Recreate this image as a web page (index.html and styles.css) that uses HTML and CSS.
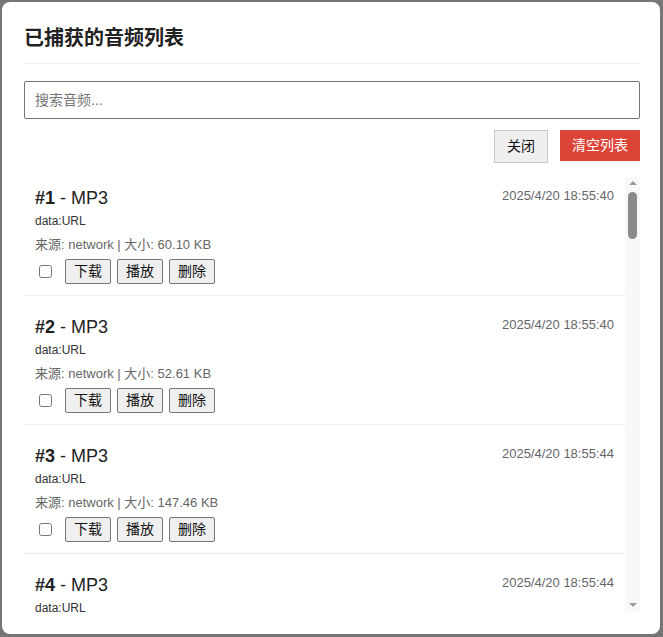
FILE: index.html
```html
<!DOCTYPE html>
<html lang="zh-CN">
<head>
<meta charset="utf-8">
<title>已捕获的音频列表</title>
<link rel="stylesheet" href="styles.css">
</head>
<body>
<div class="modal">
  <h2 class="modal-title">已捕获的音频列表</h2>
  <input class="search" type="text" placeholder="搜索音频...">
  <div class="actions">
    <button class="btn-close">关闭</button>
    <button class="btn-clear">清空列表</button>
  </div>
  <div class="list-wrap">
    <div class="list">
      <div class="item">
        <div class="item-head">
          <div class="item-title"><b>#1</b> - MP3</div>
          <div class="item-time">2025/4/20 18:55:40</div>
        </div>
        <div class="item-url">data:URL</div>
        <div class="item-meta">来源: network | 大小: 60.10 KB</div>
        <div class="item-ops">
          <input type="checkbox" class="check">
          <button class="op">下载</button>
          <button class="op">播放</button>
          <button class="op">删除</button>
        </div>
      </div>
      <div class="item">
        <div class="item-head">
          <div class="item-title"><b>#2</b> - MP3</div>
          <div class="item-time">2025/4/20 18:55:40</div>
        </div>
        <div class="item-url">data:URL</div>
        <div class="item-meta">来源: network | 大小: 52.61 KB</div>
        <div class="item-ops">
          <input type="checkbox" class="check">
          <button class="op">下载</button>
          <button class="op">播放</button>
          <button class="op">删除</button>
        </div>
      </div>
      <div class="item">
        <div class="item-head">
          <div class="item-title"><b>#3</b> - MP3</div>
          <div class="item-time">2025/4/20 18:55:44</div>
        </div>
        <div class="item-url">data:URL</div>
        <div class="item-meta">来源: network | 大小: 147.46 KB</div>
        <div class="item-ops">
          <input type="checkbox" class="check">
          <button class="op">下载</button>
          <button class="op">播放</button>
          <button class="op">删除</button>
        </div>
      </div>
      <div class="item">
        <div class="item-head">
          <div class="item-title"><b>#4</b> - MP3</div>
          <div class="item-time">2025/4/20 18:55:44</div>
        </div>
        <div class="item-url">data:URL</div>
        <div class="item-meta">来源: network | 大小: 58.22 KB</div>
        <div class="item-ops">
          <input type="checkbox" class="check">
          <button class="op">下载</button>
          <button class="op">播放</button>
          <button class="op">删除</button>
        </div>
      </div>
    </div>
    <div class="scrollbar">
      <div class="arrow-up"></div>
      <div class="thumb"></div>
      <div class="track-fill"></div>
      <div class="arrow-down"></div>
    </div>
  </div>
</div>
</body>
</html>
```

FILE: styles.css
```css
* { box-sizing: border-box; }
html, body { height: 100%; }
body {
  margin: 0;
  background: #767676;
  font-family: "Liberation Sans", "Noto Sans CJK SC", sans-serif;
  color: #222;
  padding: 2px 3px 3px 2px;
}
.modal {
  background: #fff;
  border-radius: 8px;
  height: 632px;
  padding: 22px 20px 22px 22px;
  display: flex;
  flex-direction: column;
}
.modal-title {
  margin: 0;
  font-size: 20px;
  line-height: 28px;
  font-weight: 700;
  color: #222;
  padding: 0 0 11px 0;
  border-bottom: 1px solid #eee;
}
.search {
  margin-top: 17px;
  height: 38px;
  width: 100%;
  border: 1px solid #767676;
  border-radius: 2px;
  padding: 0 10px;
  font-size: 14px;
  font-family: inherit;
  color: #222;
  outline: none;
}
.search::placeholder { color: #757575; }
.actions {
  margin-top: 11px;
  display: flex;
  justify-content: flex-end;
  align-items: flex-start;
  gap: 12px;
}
.actions button {
  font-family: inherit;
  font-size: 14px;
  line-height: 19px;
  padding: 6px 12px;
  border-radius: 0;
}
.btn-close {
  background: #efefef;
  border: 1px solid #c8c8c8;
  color: #111;
}
.btn-clear {
  background: #dc4437;
  border: none;
  color: #fff;
}
.list-wrap {
  margin-top: 14px;
  flex: 1;
  min-height: 0;
  display: flex;
}
.list {
  flex: 1;
  min-width: 0;
  overflow: hidden;
}
.item {
  padding: 10px 11px 11px 11px;
  border-bottom: 1px solid #eee;
  margin-bottom: 10px;
}
.item-head {
  display: flex;
  justify-content: space-between;
  align-items: flex-start;
}
.item-title {
  font-size: 18px;
  line-height: 22px;
  color: #222;
}
.item-time {
  font-size: 13px;
  line-height: 16px;
  color: #666;
  margin-top: 1px;
}
.item-url {
  margin-top: 4px;
  font-size: 12px;
  line-height: 16px;
  color: #333;
}
.item-meta {
  margin-top: 8px;
  font-size: 13px;
  line-height: 16px;
  color: #666;
}
.item-ops {
  margin-top: 6px;
  display: flex;
  align-items: center;
}
.check {
  width: 13px;
  height: 13px;
  margin: 0 13px 0 4px;
}
.op {
  font-family: inherit;
  font-size: 14px;
  line-height: 19px;
  padding: 2px 8px;
  background: #efefef;
  border: 1px solid #767676;
  border-radius: 2px;
  color: #111;
  margin-right: 6px;
}
.scrollbar {
  width: 15px;
  background: #f8f8f8;
  display: flex;
  flex-direction: column;
  align-items: center;
}
.arrow-up {
  margin-top: 4px;
  width: 0;
  height: 0;
  border-left: 4px solid transparent;
  border-right: 4px solid transparent;
  border-bottom: 4px solid #9a9a9a;
}
.thumb {
  margin-top: 7px;
  width: 9px;
  height: 47px;
  border-radius: 5px;
  background: #8a8a8a;
}
.track-fill { flex: 1; }
.arrow-down {
  margin-bottom: 5px;
  width: 0;
  height: 0;
  border-left: 4px solid transparent;
  border-right: 4px solid transparent;
  border-top: 4px solid #9a9a9a;
}
```
